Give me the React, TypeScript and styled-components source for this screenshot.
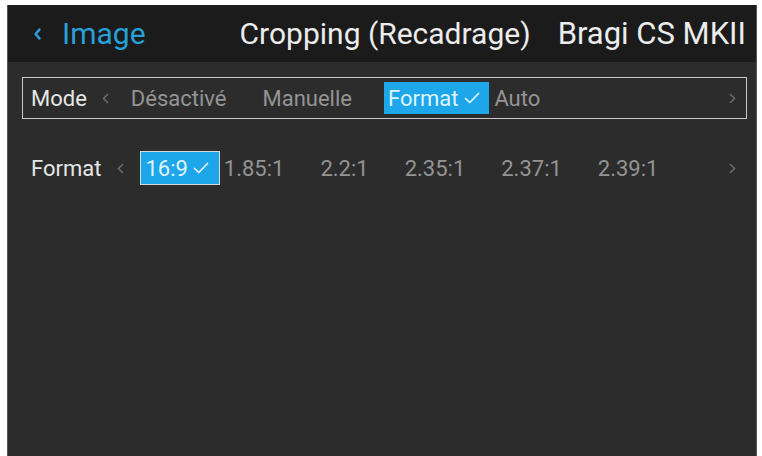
import React from "react";
import styled, { createGlobalStyle } from "styled-components";

const Global = createGlobalStyle`
  html, body { margin: 0; padding: 0; background: #ffffff; }
  body { font-family: Roboto, "Noto Sans", "Liberation Sans", sans-serif; }
  * { box-sizing: border-box; }
`;

const Screen = styled.div`
  margin: 5px 5px 0 7px;
  height: 451px;
  background: #2c2c2c;
  border-left: 1px solid #555;
  border-right: 1px solid #555;
  display: flex;
  flex-direction: column;
  overflow: hidden;
`;

const Header = styled.div`
  height: 57px;
  background: #1b1b1b;
  display: flex;
  align-items: center;
  padding: 0 10px 0 25px;
  flex-shrink: 0;
`;

const Back = styled.div`
  display: flex;
  align-items: center;
  gap: 20px;
  color: #27a0d8;
  font-size: 30px;
`;

const Title = styled.div`
  margin-left: auto;
  color: #ececec;
  font-size: 30px;
`;

const Device = styled.div`
  margin-left: 27px;
  color: #ececec;
  font-size: 31px;
`;

const Body = styled.div`
  display: flex;
  flex-direction: column;
  padding: 15px 9px 0 14px;
  gap: 28px;
`;

const Row = styled.div<{ $focused?: boolean }>`
  height: 42px;
  border: 1px solid ${(p) => (p.$focused ? "#c8c8c8" : "transparent")};
  display: flex;
  align-items: center;
  padding: 0 10px 0 8px;
`;

const Label = styled.div`
  color: #e6e6e6;
  font-size: 22px;
  margin-right: 15px;
`;

const Nav = styled.span<{ $left?: boolean }>`
  display: inline-flex;
  width: 8px;
  justify-content: center;
  margin-right: ${(p) => (p.$left ? "17px" : "0")};
  margin-left: ${(p) => (p.$left ? "0" : "auto")};
`;

const Options = styled.div`
  display: flex;
  align-items: center;
  gap: 1px;
`;

const Option = styled.div<{ $selected?: boolean; $outlined?: boolean }>`
  display: flex;
  align-items: center;
  height: 32px;
  padding: 0 4px;
  font-size: 22px;
  color: ${(p) => (p.$selected ? "#dff4ff" : "#949494")};
  background: ${(p) => (p.$selected ? "#1ea6ea" : "transparent")};
  outline: ${(p) => (p.$outlined ? "1px solid #d9d9d9" : "none")};
`;

const CheckSlot = styled.span`
  display: inline-flex;
  width: 27px;
  justify-content: center;
  align-items: center;
`;

const Chevron = ({ dir, color, w, h, sw }: { dir: "l" | "r"; color: string; w: number; h: number; sw: number }) => (
  <svg width={w} height={h} viewBox={`0 0 ${w} ${h}`} fill="none">
    <polyline
      points={dir === "l" ? `${w - sw},${sw} ${sw},${h / 2} ${w - sw},${h - sw}` : `${sw},${sw} ${w - sw},${h / 2} ${sw},${h - sw}`}
      stroke={color}
      strokeWidth={sw}
      strokeLinecap="round"
      strokeLinejoin="round"
    />
  </svg>
);

const Check = () => (
  <svg width="16" height="12" viewBox="0 0 16 12" fill="none">
    <polyline points="1.5,6.5 5.8,10.5 14.5,1.5" stroke="#e6f7ff" strokeWidth="1.7" strokeLinecap="round" strokeLinejoin="round" />
  </svg>
);

type Opt = { label: string };

const OptionRow = ({
  label,
  options,
  selected,
  focused,
  outlined,
}: {
  label: string;
  options: Opt[];
  selected: number;
  focused?: boolean;
  outlined?: boolean;
}) => (
  <Row $focused={focused}>
    <Label>{label}</Label>
    <Nav $left>
      <Chevron dir="l" color="#6f6f6f" w={7} h={11} sw={1.4} />
    </Nav>
    <Options>
      {options.map((o, i) => (
        <Option key={o.label} $selected={i === selected} $outlined={outlined && i === selected}>
          {o.label}
          <CheckSlot>{i === selected ? <Check /> : null}</CheckSlot>
        </Option>
      ))}
    </Options>
    <Nav>
      <Chevron dir="r" color="#6f6f6f" w={7} h={11} sw={1.4} />
    </Nav>
  </Row>
);

export default function App() {
  return (
    <>
      <Global />
      <Screen>
        <Header>
          <Back>
            <Chevron dir="l" color="#27a0d8" w={9} h={14} sw={2.6} />
            <span>Image</span>
          </Back>
          <Title>Cropping (Recadrage)</Title>
          <Device>Bragi CS MKII</Device>
        </Header>
        <Body>
          <OptionRow
            label="Mode"
            focused
            selected={2}
            options={[{ label: "Désactivé" }, { label: "Manuelle" }, { label: "Format" }, { label: "Auto" }]}
          />
          <OptionRow
            label="Format"
            outlined
            selected={0}
            options={[
              { label: "16:9" },
              { label: "1.85:1" },
              { label: "2.2:1" },
              { label: "2.35:1" },
              { label: "2.37:1" },
              { label: "2.39:1" },
            ]}
          />
        </Body>
      </Screen>
    </>
  );
}
